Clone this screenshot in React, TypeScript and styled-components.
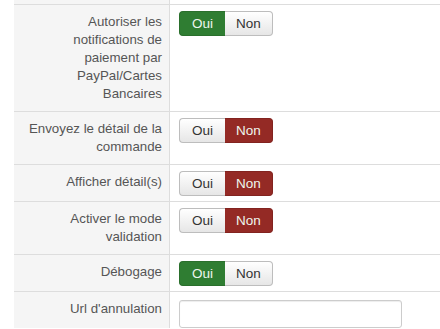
import { Fragment } from 'react';
import styled, { createGlobalStyle } from 'styled-components';

import type { FC } from 'react';

const GlobalStyle = createGlobalStyle`
  body {
    margin: 0;
    background: #fff;
    font-family: "Liberation Sans", Arial, sans-serif;
    font-size: 13px;
    color: #333;
  }
`;

const Table = styled.div`
  margin-left: 14px;
  display: grid;
  grid-template-columns: 156px 1fr;
`;

const Label = styled.div<{ $stub?: boolean }>`
  background: #f5f5f5;
  border-top: ${props => (props.$stub ? 'none' : '1px solid #ddd')};
  border-right: 1px solid #ddd;
  padding: ${props => (props.$stub ? '0' : '8px 7px 8px 10px')};
  height: ${props => (props.$stub ? '4px' : 'auto')};
  text-align: right;
  line-height: 18px;
  font-size: 13.3px;
  color: #555;
`;

const Control = styled.div<{ $stub?: boolean; $input?: boolean }>`
  border-top: ${props => (props.$stub ? 'none' : '1px solid #ddd')};
  padding: ${props =>
    props.$stub ? '0' : props.$input ? '8px 0 0 9px' : '6px 0 5px 9px'};
`;

const Group = styled.div`
  display: inline-flex;
`;

const Choice = styled.span<{ $on: boolean; $tone: 'yes' | 'no' }>`
  display: block;
  width: ${props => (props.$tone === 'yes' ? '46px' : '48px')};
  height: 25px;
  box-sizing: border-box;
  text-align: center;
  line-height: 23px;
  font-size: 13.5px;
  border: 1px solid
    ${props =>
      props.$on ? (props.$tone === 'yes' ? '#2a6f2c' : '#82231f') : '#bdbdbd'};
  color: ${props => (props.$on ? '#eef6ee' : '#333')};
  background: ${props =>
    props.$on
      ? props.$tone === 'yes'
        ? '#2f7d32'
        : '#942a25'
      : 'linear-gradient(#ffffff, #e6e6e6)'};
  box-shadow: ${props =>
    props.$on ? 'none' : 'inset 0 1px 0 rgba(255, 255, 255, 0.4)'};

  &:first-child {
    border-radius: 4px 0 0 4px;
    border-right: none;
  }

  &:last-child {
    border-radius: 0 4px 4px 0;
    border-left: none;
  }
`;

const TextInput = styled.input`
  display: block;
  width: 223px;
  height: 28px;
  box-sizing: border-box;
  border: 1px solid #ccc;
  border-radius: 3px;
  box-shadow: inset 0 1px 1px rgba(0, 0, 0, 0.075);
  font-family: inherit;
  font-size: 13px;
`;

type Row = { label: string; value: boolean };

const rows: Row[] = [
  {
    label: 'Autoriser les notifications de paiement par PayPal/Cartes Bancaires',
    value: true,
  },
  { label: 'Envoyez le détail de la commande', value: false },
  { label: 'Afficher détail(s)', value: false },
  { label: 'Activer le mode validation', value: false },
  { label: 'Débogage', value: true },
];

const Toggle: FC<{ value: boolean }> = ({ value }) => (
  <Group>
    <Choice $on={value} $tone="yes">
      Oui
    </Choice>
    <Choice $on={!value} $tone="no">
      Non
    </Choice>
  </Group>
);

const App: FC = () => (
  <>
    <GlobalStyle />
    <Table>
      <Label $stub />
      <Control $stub />
      {rows.map(row => (
        <Fragment key={row.label}>
          <Label>{row.label}</Label>
          <Control>
            <Toggle value={row.value} />
          </Control>
        </Fragment>
      ))}
      <Label>Url d'annulation</Label>
      <Control $input>
        <TextInput type="text" />
      </Control>
    </Table>
  </>
);

export default App;
